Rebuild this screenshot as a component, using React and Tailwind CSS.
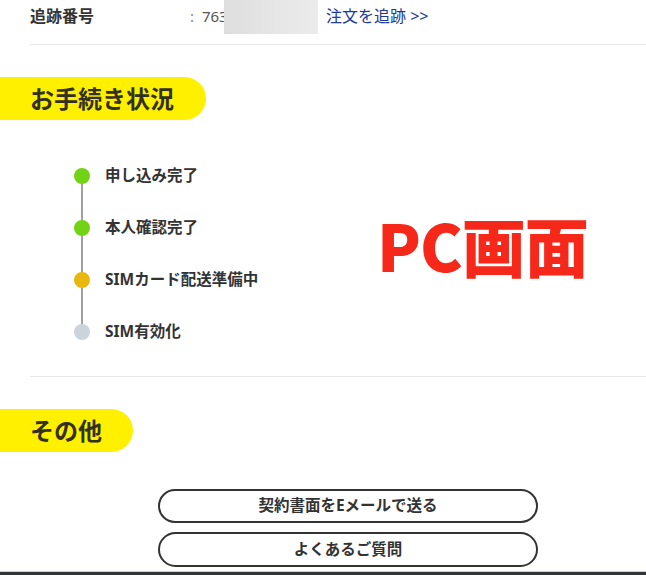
import React from 'react';

const steps = [
  { label: '申し込み完了', dot: 'bg-[#72d215]' },
  { label: '本人確認完了', dot: 'bg-[#72d215]' },
  { label: 'SIMカード配送準備中', dot: 'bg-[#eab70f]' },
  { label: 'SIM有効化', dot: 'bg-[#cdd3da]' },
];

const jp = { fontFamily: '"Noto Sans", "Noto Sans CJK JP", sans-serif' };

const SectionPill = ({ children, width }) => (
  <div
    className={`h-[43px] ${width} bg-[#fff000] rounded-r-full flex items-center pl-[30px] text-[24px] font-bold text-[#33301f] leading-none`}
  >
    {children}
  </div>
);

export default function App() {
  return (
    <div className="w-[646px] h-[575px] bg-white overflow-hidden flex flex-col text-[#333]" style={jp}>
      {/* tracking row */}
      <div className="ml-[30px] h-[45px] border-b border-[#e8e8e8] flex items-start pt-[6px] relative">
        <span className="w-[160px] text-[16px] font-bold leading-[20px]">追跡番号</span>
        <span className="text-[15px] text-[#555] leading-[20px]">
          <span className="text-[#888] mr-[4px]">:</span> 763
        </span>
        <div className="absolute top-0 left-[194px] w-[94px] h-[34px] bg-gradient-to-r from-[#dedede] to-[#ececec]" />
        <a className="absolute left-[296px] top-[6px] text-[16px] leading-[20px] text-[#1d3a9a]">注文を追跡 &gt;&gt;</a>
      </div>

      <div className="mt-[32px]">
        <SectionPill width="w-[206px]">お手続き状況</SectionPill>
      </div>

      {/* progress */}
      <div className="mt-[30px] flex">
        <div className="relative ml-[74px] w-[303px]">
          <div className="absolute left-[7px] top-[26px] w-[2px] h-[156px] bg-[#a0a0a0]" />
          {steps.map((s) => (
            <div key={s.label} className="h-[52px] flex items-center relative">
              <span className={`w-[16px] h-[16px] rounded-full ${s.dot}`} />
              <span className="ml-[15px] text-[15.5px] font-bold text-[#333] leading-none">{s.label}</span>
            </div>
          ))}
        </div>
        <div
          className="mt-[62px] text-[#f5281a] text-[64px] font-black leading-none tracking-[-1px]"
          style={{ fontFamily: '"Noto Sans CJK JP", sans-serif' }}
        >
          PC画面
        </div>
      </div>

      <div className="ml-[30px] mt-[18px] border-t border-[#e8e8e8]" />

      <div className="mt-[32px]">
        <SectionPill width="w-[133px]">その他</SectionPill>
      </div>

      <div className="mt-[37px] ml-[158px] w-[380px] flex flex-col gap-[9px]">
        <button className="h-[34px] rounded-full border-2 border-[#333] text-[15.5px] font-bold text-[#333] flex items-center justify-center">
          契約書面をEメールで送る
        </button>
        <button className="h-[35px] rounded-full border-2 border-[#333] text-[15.5px] font-bold text-[#333] flex items-center justify-center">
          よくあるご質問
        </button>
      </div>

      <div className="mt-auto h-[4px] bg-[#2f3439] border-t border-[#c9d2da]" />
    </div>
  );
}
